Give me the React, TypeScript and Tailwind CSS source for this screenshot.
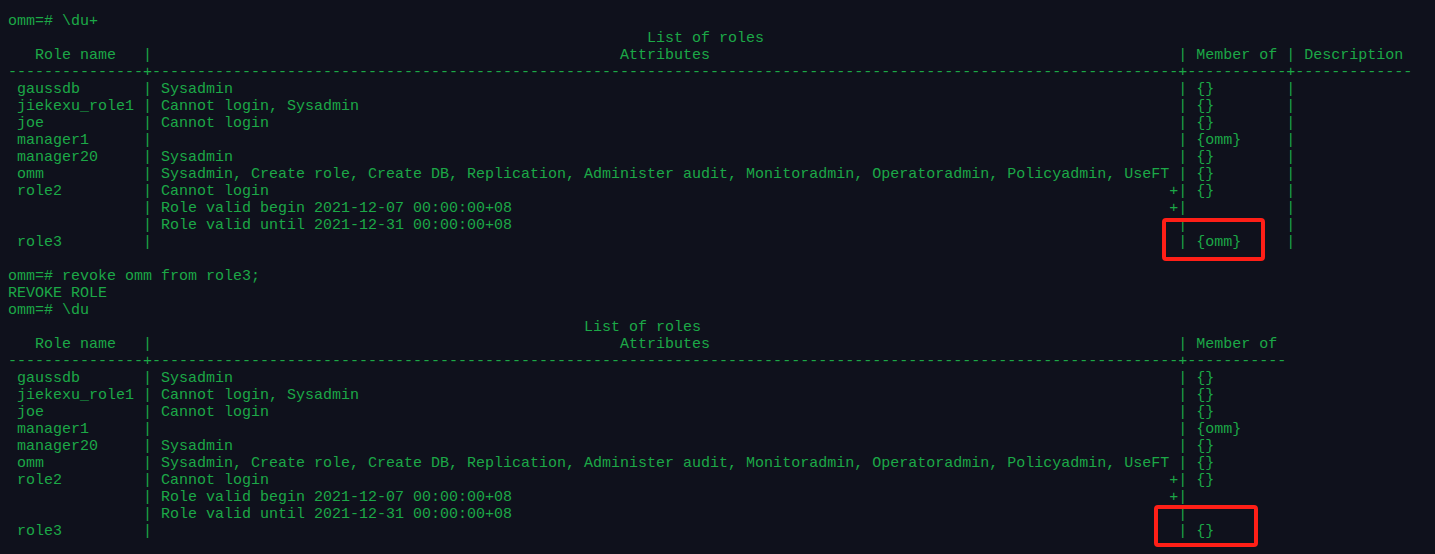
import React from "react";

const pad = (s: string, n: number) => s + " ".repeat(Math.max(0, n - s.length));
const center = (s: string, n: number) => {
  const l = Math.floor((n - s.length) / 2);
  return " ".repeat(l) + s + " ".repeat(n - s.length - l);
};

const LONG =
  "Sysadmin, Create role, Create DB, Replication, Administer audit, Monitoradmin, Operatoradmin, Policyadmin, UseFT";

type Row = [string, string[], string];
const baseRows: Row[] = [
  ["gaussdb", ["Sysadmin"], "{}"],
  ["jiekexu_role1", ["Cannot login, Sysadmin"], "{}"],
  ["joe", ["Cannot login"], "{}"],
  ["manager1", [""], "{omm}"],
  ["manager20", ["Sysadmin"], "{}"],
  ["omm", [LONG], "{}"],
  [
    "role2",
    [
      "Cannot login",
      "Role valid begin 2021-12-07 00:00:00+08",
      "Role valid until 2021-12-31 00:00:00+08",
    ],
    "{}",
  ],
];

function table(withDesc: boolean, role3Mem: string): string[] {
  const rows: Row[] = [...baseRows, ["role3", [""], role3Mem]];
  const out: string[] = [];
  const width = withDesc ? 156 : 142;
  out.push(" ".repeat(Math.floor((width - 13) / 2)) + "List of roles");
  let h =
    " " + center("Role name", 13) + " | " + center("Attributes", 112) + " | Member of";
  if (withDesc) h += " | Description";
  out.push(h);
  let d = "-".repeat(15) + "+" + "-".repeat(114) + "+" + "-".repeat(11);
  if (withDesc) d += "+" + "-".repeat(13);
  out.push(d);
  for (const [name, attrs, mem] of rows) {
    attrs.forEach((a, i) => {
      const last = i === attrs.length - 1;
      let line =
        " " +
        pad(i === 0 ? name : "", 13) +
        " | " +
        pad(a, 112) +
        (last ? " " : "+") +
        "| " +
        (i === 0 ? (withDesc ? pad(mem, 9) : mem) : withDesc ? " ".repeat(9) : "");
      if (withDesc) line += " | ";
      out.push(line);
    });
  }
  return out;
}

const lines: string[] = [
  "omm=# \\du+",
  ...table(true, "{omm}"),
  "",
  "omm=# revoke omm from role3;",
  "REVOKE ROLE",
  "omm=# \\du",
  ...table(false, "{}"),
];

export default function App() {
  return (
    <div className="relative h-[554px] w-[1435px] overflow-hidden bg-[#0f111c]">
      <pre
        className="m-0 pl-[8px] pt-[13px] text-[15px] leading-[17px] text-[#1ca847] whitespace-pre"
        style={{ fontFamily: '"Liberation Mono", "Courier New", monospace' }}
      >
        {lines.join("\n")}
      </pre>
      <div className="absolute left-[1162px] top-[218px] h-[43px] w-[103px] rounded-[4px] border-[4px] border-[#ff1f17]" />
      <div className="absolute left-[1154px] top-[505px] h-[42px] w-[104px] rounded-[4px] border-[4px] border-[#ff1f17]" />
    </div>
  );
}
